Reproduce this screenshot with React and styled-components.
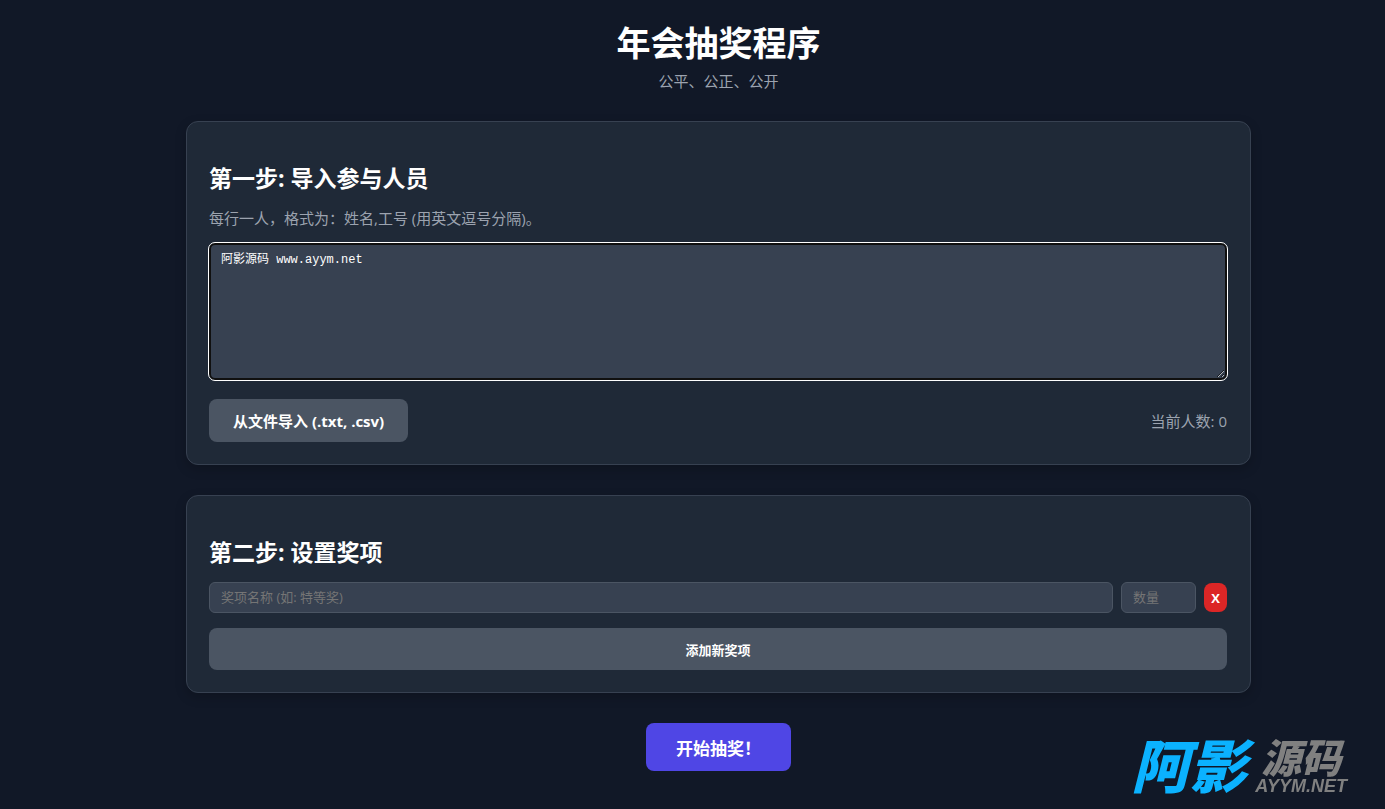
import { useState } from "react";
import styled, { createGlobalStyle } from "styled-components";

function App() {
  const [people, setPeople] = useState("阿影源码 www.ayym.net");
  const [prizes, setPrizes] = useState([{ id: 1, name: "", count: "" }]);

  const addPrize = () => {
    setPrizes([...prizes, { id: Date.now(), name: "", count: "" }]);
  };

  const removePrize = (id) => {
    setPrizes(prizes.filter((prize) => prize.id !== id));
  };

  const updatePrize = (id, field, value) => {
    setPrizes(
      prizes.map((prize) =>
        prize.id === id ? { ...prize, [field]: value } : prize
      )
    );
  };

  return (
    <>
      <GlobalStyle />
      <Page>
        <Container>
          <Header>
            <h1>年会抽奖程序</h1>
            <p>公平、公正、公开</p>
          </Header>

          <Card>
            <CardTitle>第一步: 导入参与人员</CardTitle>
            <Hint id="people-hint">
              每行一人，格式为：姓名,工号 (用英文逗号分隔)。
            </Hint>
            <PeopleArea
              aria-labelledby="people-hint"
              spellCheck={false}
              value={people}
              onChange={(e) => setPeople(e.target.value)}
            />
            <ImportRow>
              <Button type="button">从文件导入 (.txt, .csv)</Button>
              <Count>当前人数: 0</Count>
            </ImportRow>
          </Card>

          <Card>
            <CardTitle>第二步: 设置奖项</CardTitle>
            {prizes.map((prize) => (
              <PrizeRow key={prize.id}>
                <NameInput
                  type="text"
                  aria-label="奖项名称"
                  placeholder="奖项名称 (如: 特等奖)"
                  value={prize.name}
                  onChange={(e) =>
                    updatePrize(prize.id, "name", e.target.value)
                  }
                />
                <CountInput
                  type="number"
                  min="1"
                  aria-label="数量"
                  placeholder="数量"
                  value={prize.count}
                  onChange={(e) =>
                    updatePrize(prize.id, "count", e.target.value)
                  }
                />
                <RemoveButton
                  type="button"
                  onClick={() => removePrize(prize.id)}
                >
                  X
                </RemoveButton>
              </PrizeRow>
            ))}
            <AddButton type="button" onClick={addPrize}>
              添加新奖项
            </AddButton>
          </Card>

          <StartButton type="button">开始抽奖！</StartButton>
        </Container>
      </Page>

      <Watermark>
        <BrandMain>阿影</BrandMain>
        <BrandSide>
          <span>源码</span>
          <small>AYYM.NET</small>
        </BrandSide>
      </Watermark>
    </>
  );
}

const GlobalStyle = createGlobalStyle`
  * {
    box-sizing: border-box;
  }
  body {
    margin: 0;
    background: #111827;
    color: #fff;
    font-family: "Open Sans", "Noto Sans CJK SC", sans-serif;
    font-size: 15px;
    line-height: 24px;
  }
  h1, h2, p {
    margin: 0;
  }
  button, input {
    font-family: inherit;
  }
`;

const Page = styled.main`
  min-height: 100vh;
  padding: 21px 0 38px 52px;
`;

const Container = styled.div`
  display: flex;
  flex-direction: column;
  align-items: center;
  gap: 30px;
  width: 80%;
  max-width: 1065px;
  margin: 0 auto;
`;

const Header = styled.header`
  display: flex;
  flex-direction: column;
  gap: 4px;
  margin-bottom: -2px;
  text-align: center;
  h1 {
    font-size: 34px;
    font-weight: 700;
    line-height: 44px;
  }
  p {
    color: #9ca3af;
  }
`;

const Card = styled.section`
  width: 100%;
  padding: 22px 23px 22px 22px;
  background: #1f2937;
  border: 1px solid #374151;
  border-radius: 12px;
  box-shadow: 0 4px 12px rgba(0, 0, 0, 0.2);
`;

const CardTitle = styled.h2`
  margin: 17px 0 13px;
  font-size: 23px;
  font-weight: 700;
  line-height: 34px;
`;

const Hint = styled.p`
  margin-bottom: 15px;
  color: #9ca3af;
  line-height: 20px;
`;

const PeopleArea = styled.textarea`
  display: block;
  width: 100%;
  height: 137px;
  padding: 6px 10px;
  background: #374151;
  color: #fff;
  border: 2px solid #101010;
  border-radius: 6px;
  outline: 1px solid #fff;
  font-family: "Liberation Mono", "Noto Sans CJK SC", monospace;
  font-size: 12px;
  line-height: 18px;
  resize: vertical;
`;

const ImportRow = styled.div`
  display: flex;
  align-items: center;
  justify-content: space-between;
  margin-top: 19px;
`;

const Button = styled.button`
  height: 43px;
  padding: 0 24px;
  background: #4b5563;
  color: #fff;
  border: none;
  border-radius: 8px;
  font-size: 15px;
  font-weight: 700;
  cursor: pointer;
`;

const Count = styled.span`
  color: #9ca3af;
`;

const PrizeRow = styled.div`
  display: flex;
  align-items: center;
  gap: 8px;
  margin-bottom: 15px;
`;

const NameInput = styled.input`
  flex: 1;
  min-width: 0;
  height: 31px;
  padding: 0 11px 2px;
  background: #374151;
  color: #fff;
  border: 1px solid #4b5563;
  border-radius: 6px;
  font-size: 13px;
  &::placeholder {
    color: #757575;
  }
`;

const CountInput = styled(NameInput)`
  flex: none;
  width: 75px;
`;

const RemoveButton = styled(Button)`
  width: 23px;
  height: 29px;
  padding: 0;
  background: #dc2626;
  font-size: 13px;
`;

const AddButton = styled(Button)`
  width: 100%;
  height: 42px;
  font-size: 13px;
`;

const StartButton = styled(Button)`
  height: 48px;
  padding: 0 30px;
  background: #4f46e5;
  font-size: 17px;
`;

const Watermark = styled.div`
  position: fixed;
  right: 38px;
  bottom: 14px;
  display: flex;
  align-items: flex-end;
  gap: 8px;
  font-family: "Liberation Sans", "Noto Sans CJK SC", sans-serif;
  font-style: italic;
  font-weight: 900;
  pointer-events: none;
`;

const BrandMain = styled.span`
  color: #0bb2ff;
  font-size: 58px;
  line-height: 54px;
`;

const BrandSide = styled.div`
  display: flex;
  flex-direction: column;
  align-items: center;
  color: #808080;
  span {
    font-size: 40px;
    line-height: 36px;
  }
  small {
    font-size: 18px;
    line-height: 18px;
  }
`;

export default App;
